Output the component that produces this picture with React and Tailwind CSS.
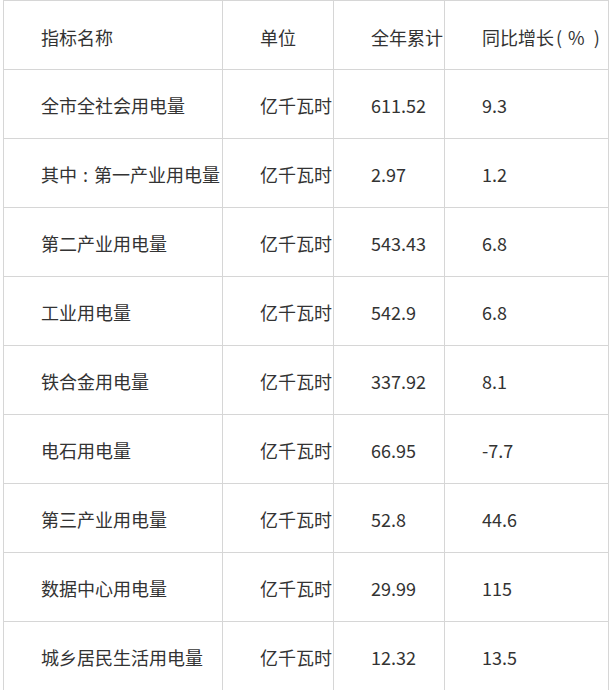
import React from 'react';

const percentHead = (
  <>
    同比增长<span className="ml-[2px]">(</span>
    <span className="ml-[6px]">%</span>
    <span className="ml-[9px]">)</span>
  </>
);

const firstIndustry = (
  <>
    其中<span className="mx-[6px]">:</span>第一产业用电量
  </>
);

const rows = [
  ['指标名称', '单位', '全年累计', percentHead],
  ['全市全社会用电量', '亿千瓦时', '611.52', '9.3'],
  [firstIndustry, '亿千瓦时', '2.97', '1.2'],
  ['第二产业用电量', '亿千瓦时', '543.43', '6.8'],
  ['工业用电量', '亿千瓦时', '542.9', '6.8'],
  ['铁合金用电量', '亿千瓦时', '337.92', '8.1'],
  ['电石用电量', '亿千瓦时', '66.95', '-7.7'],
  ['第三产业用电量', '亿千瓦时', '52.8', '44.6'],
  ['数据中心用电量', '亿千瓦时', '29.99', '115'],
  ['城乡居民生活用电量', '亿千瓦时', '12.32', '13.5'],
];

const App = () => {
  return (
    <div className="w-[613px] h-[690px] overflow-hidden bg-white">
      <div
        className="ml-[3px] w-[606px] grid grid-cols-[219px_111px_111px_164px] border-l border-t border-[#d6d6d6] text-[18px] text-[#333333]"
        style={{ fontFamily: '"Noto Sans CJK SC", "Noto Sans", sans-serif' }}
      >
        {rows.map((row, i) =>
          row.map((cell, j) => (
            <div
              key={`${i}-${j}`}
              className={`h-[69px] border-r border-b border-[#d6d6d6] flex items-center pl-[37px] whitespace-nowrap leading-none ${i === 0 ? 'pt-[3px]' : 'pt-[1px]'}`}
            >
              {cell}
            </div>
          ))
        )}
      </div>
    </div>
  );
};

export default App;
